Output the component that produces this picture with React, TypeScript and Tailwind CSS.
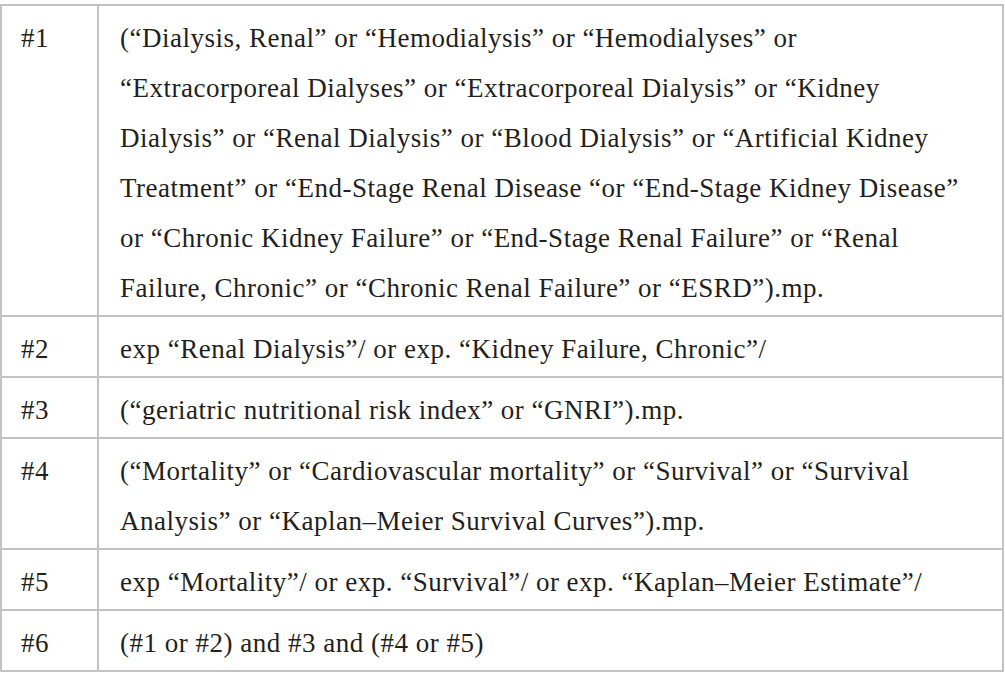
import React from "react";

const rows: { id: string; lines: string[] }[] = [
  {
    id: "#1",
    lines: [
      "(“Dialysis, Renal” or “Hemodialysis” or “Hemodialyses” or",
      "“Extracorporeal Dialyses” or “Extracorporeal Dialysis” or “Kidney",
      "Dialysis” or “Renal Dialysis” or “Blood Dialysis” or “Artificial Kidney",
      "Treatment” or “End-Stage Renal Disease “or “End-Stage Kidney Disease”",
      "or “Chronic Kidney Failure” or “End-Stage Renal Failure” or “Renal",
      "Failure, Chronic” or “Chronic Renal Failure” or “ESRD”).mp.",
    ],
  },
  { id: "#2", lines: ["exp “Renal Dialysis”/ or exp. “Kidney Failure, Chronic”/"] },
  { id: "#3", lines: ["(“geriatric nutritional risk index” or “GNRI”).mp."] },
  {
    id: "#4",
    lines: [
      "(“Mortality” or “Cardiovascular mortality” or “Survival” or “Survival",
      "Analysis” or “Kaplan–Meier Survival Curves”).mp.",
    ],
  },
  { id: "#5", lines: ["exp “Mortality”/ or exp. “Survival”/ or exp. “Kaplan–Meier Estimate”/"] },
  { id: "#6", lines: ["(#1 or #2) and #3 and (#4 or #5)"] },
];

export default function App() {
  return (
    <div className="w-[1005px] h-[691px] bg-white pt-[4px] text-[#231f20] font-['Liberation_Serif',serif]">
      <div className="w-[1004px] border-2 border-[#c2c2c2] flex flex-col">
        {rows.map((r, i) => (
          <div
            key={r.id}
            className={i > 0 ? "flex border-t-2 border-[#c2c2c2]" : "flex"}
          >
            <div className="w-[97px] shrink-0 border-r-2 border-[#c2c2c2] pl-[19px] pt-[7px] pb-[2px] text-[27px] tracking-[0.5px] leading-[50px]">
              {r.id}
            </div>
            <div className="pl-[21px] pt-[7px] pb-[2px] text-[27px] tracking-[0.5px] leading-[50px]">
              {r.lines.map((l, j) => (
                <div key={j} className="whitespace-nowrap">
                  {l}
                </div>
              ))}
            </div>
          </div>
        ))}
      </div>
    </div>
  );
}
